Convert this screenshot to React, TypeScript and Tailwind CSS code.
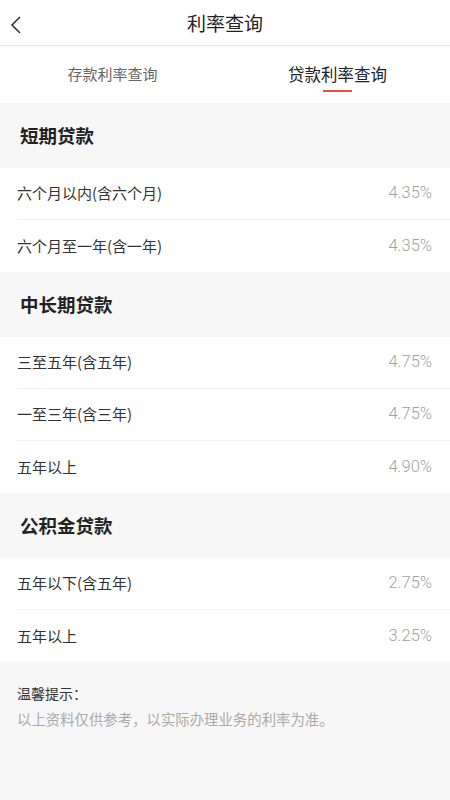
import React from "react";

type Row = { name: string; rate: string };
const sections: { title: string; rows: Row[] }[] = [
  {
    title: "短期贷款",
    rows: [
      { name: "六个月以内(含六个月)", rate: "4.35%" },
      { name: "六个月至一年(含一年)", rate: "4.35%" },
    ],
  },
  {
    title: "中长期贷款",
    rows: [
      { name: "三至五年(含五年)", rate: "4.75%" },
      { name: "一至三年(含三年)", rate: "4.75%" },
      { name: "五年以上", rate: "4.90%" },
    ],
  },
  {
    title: "公积金贷款",
    rows: [
      { name: "五年以下(含五年)", rate: "2.75%" },
      { name: "五年以上", rate: "3.25%" },
    ],
  },
];

export default function App() {
  return (
    <div
      className="w-[450px] h-[800px] bg-[#f7f7f7] flex flex-col overflow-hidden"
      style={{ fontFamily: '"Noto Sans CJK SC", "Noto Sans", sans-serif' }}
    >
      <div className="h-[46px] bg-white border-b border-[#e6e6e6] flex items-center relative shrink-0">
        <svg className="absolute left-[9px] top-[15px]" width="14" height="20" viewBox="0 0 14 20">
          <path d="M11 2 L3 10 L11 18" fill="none" stroke="#333" strokeWidth="1.6" />
        </svg>
        <div className="flex-1 text-center text-[19px] text-[#222] pt-[1px]">利率查询</div>
      </div>
      <div className="h-[57px] bg-white flex shrink-0">
        <div className="flex-1 flex items-center justify-center text-[15px] text-[#666]">存款利率查询</div>
        <div className="flex-1 flex flex-col items-center justify-center relative">
          <span className="text-[16.5px] text-[#222]">贷款利率查询</span>
          <span className="absolute top-[44px] left-[98px] w-[29px] h-[2px] bg-[#e4513d]" />
        </div>
      </div>
      {sections.map((s) => (
        <div key={s.title}>
          <div className="h-[65px] flex items-center pl-[20px] text-[18.5px] font-semibold text-[#222]">{s.title}</div>
          <div className="bg-white">
            {s.rows.map((r, i) => (
              <div key={i} className="pl-[17px]">
                <div
                  className={
                    "h-[52px] flex items-center justify-between pr-[18px] " +
                    (i < s.rows.length - 1 ? "border-b border-[#f3f3f3]" : "")
                  }
                >
                  <span className="text-[15px] text-[#333]">{r.name}</span>
                  <span
                    className="text-[16.5px] font-light text-[#a3a3a3]"
                    style={{ fontFamily: '"Roboto", "Noto Sans", sans-serif' }}
                  >
                    {r.rate}
                  </span>
                </div>
              </div>
            ))}
          </div>
        </div>
      ))}
      <div className="pl-[17px] pt-[21px]">
        <div className="text-[14px] text-[#333] leading-[20px]">温馨提示：</div>
        <div className="text-[14.4px] text-[#aaa] leading-[20px] mt-[6px]">以上资料仅供参考，以实际办理业务的利率为准。</div>
      </div>
    </div>
  );
}
